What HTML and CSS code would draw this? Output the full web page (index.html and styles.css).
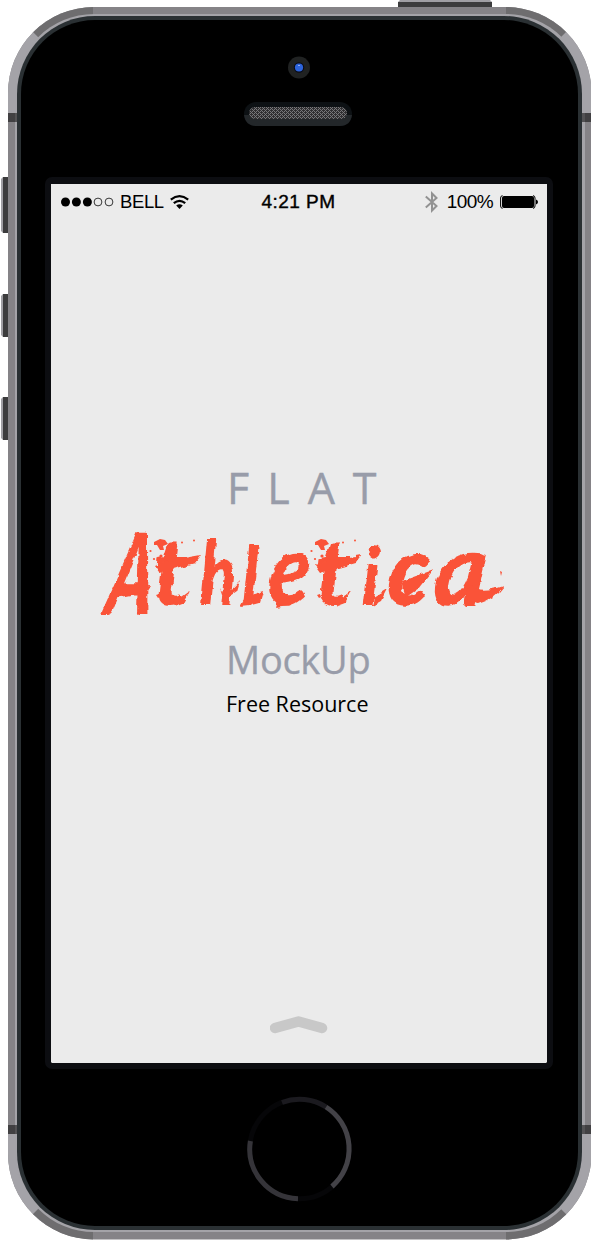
FILE: index.html
```
<!DOCTYPE html>
<html lang="en">
<head>
<meta charset="utf-8">
<title>Flat Athletica MockUp</title>
<link rel="stylesheet" href="styles.css">
</head>
<body>
<div class="phone">
  <svg class="shell" width="591" height="1240" viewBox="0 0 591 1240" aria-hidden="true">
    <defs>
      <clipPath id="body"><rect x="8" y="7" width="583.5" height="1232.5" rx="86"/></clipPath>
    </defs>
    <g fill="#3c3c3d">
      <path d="M3 177h5v56H3zM3 294h5v43H3zM3 397h5v43H3zM398 2h94v5h-94z"/>
    </g>
    <path fill="#a09fa4" d="M1 179l2-2v56l-2-2zM1 296l2-2v43l-2-2zM1 399l2-2v43l-2-2zM400 0h90l2 2h-94z"/>
    <g clip-path="url(#body)">
      <path fill="#858387" d="M0 0h591v1240H0z"/>
      <path fill="#a4a3a8" d="M8 20h52v93H8zM539 20h52v93h-52zM8 1134h52v92H8zM539 1134h52v92h-52z"/>
      <path fill="#6e6d6f" d="M93 7v40H48L33 32V0h60zM506 7v40h45l15-15V0h-60zM93 1240v-41H48l-15 15v26zM506 1240v-41h45l15 15v26z"/>
      <rect x="15" y="14" width="570" height="1218" rx="79" fill="#a4a3a8"/>
      <path fill="#414042" d="M8 113h7v9H8zM585 113h6v9h-6zM8 1125h7v9H8zM585 1125h6v9h-6z"/>
      <path fill="#535254" d="M15 113h3v9h-3zM582 113h3v9h-3zM15 1125h3v9h-3zM582 1125h3v9h-3z"/>
    </g>
    <rect x="17" y="16" width="565" height="1214" rx="78" fill="#2a3033"/>
    <rect x="21" y="20" width="557" height="1206" rx="74" fill="#000"/>
  </svg>

  <header class="top">
    <svg class="sensors" width="110" height="72" viewBox="0 0 110 72" aria-hidden="true">
      <defs>
        <pattern id="mesh" width="4" height="4" patternUnits="userSpaceOnUse">
          <path fill="#302f31" d="M0 0h4v4H0z"/>
          <path fill="#77777a" d="M0 0h1v1H0zM1 3h1v1H1zM2 2h1v1H2zM3 1h1v1H3zM0 2h1v1H0zM2 0h1v1H2z"/>
        </pattern>
      </defs>
      <circle cx="55" cy="12.5" r="11" fill="#202222"/>
      <circle cx="55" cy="12.5" r="5.2" fill="#0a0d19"/>
      <circle cx="55" cy="12.5" r="4.1" fill="#2d64db"/>
      <path fill="#91acf0" d="M54 10h2v1h-2z"/>
      <rect x="0" y="47" width="108" height="24" rx="12" fill="#0d1114"/>
      <path fill="#23272a" d="M0 60h108c-1 7-5 11-12 11H12C5 71 1 67 0 60z"/>
      <rect x="5" y="52" width="98" height="12" rx="6" fill="url(#mesh)"/>
    </svg>
  </header>

  <main class="screen">
    <div class="status">
      <div class="carrier">
        <svg width="53" height="10" viewBox="0 0 53 10" aria-hidden="true">
          <circle cx="4.5" cy="5" r="4.5"/><circle cx="15.4" cy="5" r="4.5"/><circle cx="26.4" cy="5" r="4.5"/>
          <g fill="none" stroke="#222" stroke-width=".9"><circle cx="37" cy="5" r="3.9"/><circle cx="48" cy="5" r="3.9"/></g>
        </svg>
        <span class="bell">BELL</span>
        <svg class="wifi" width="19" height="14" viewBox="0 0 19 14" aria-hidden="true">
          <g fill="none" stroke="#000" stroke-width="2.2"><path d="M.8 4.6Q9.5-2.2 18.2 4.6"/><path d="M3.8 8.2Q9.5 3.4 15.2 8.2"/></g>
          <path d="M6.2 10.6Q9.5 7.9 12.8 10.6L9.5 13.9z"/>
        </svg>
      </div>
      <div class="time">4:21 PM</div>
      <div class="power">
        <svg width="13" height="22" viewBox="0 0 13 22" aria-hidden="true"><path d="M.8 5.5L11.500 15 7 19.500V2.500L11.500 7 .8 16.500" fill="none" stroke="#929292" stroke-width="2"/></svg>
        <span class="percent">100%</span>
        <svg class="battery" width="38" height="14" viewBox="0 0 38 14" aria-hidden="true">
          <path d="M2.5.6Q.6.8.6 3v8q0 2.2 1.9 2.4M33 .6q2 .2 2 2.4v8q0 2.2-2 2.4" fill="none" stroke="#000"/>
          <rect x="2" y="1" width="32" height="12" rx="2"/><path d="M36 4.5q2 .7 2 2.5t-2 2.5z"/>
        </svg>
      </div>
    </div>

    <section class="title">
      <p class="flat">FLAT</p>
      <div class="brand">
        <h1 class="brush"><span class="g a1">A</span><span class="g t1">t</span><span class="g h1">h</span><span class="g l1">l</span><span class="g e1">e</span><span class="g t2">t</span><span class="g i1">i</span><span class="g c1">c</span><span class="g a2">a</span></h1>
        <svg class="spatter" width="420" height="100" viewBox="90 525 420 100" aria-hidden="true">
          <defs>
            <filter id="rough" x="-5%" y="-10%" width="110%" height="120%">
              <feTurbulence type="fractalNoise" baseFrequency=".11" numOctaves="3" seed="8" result="n"/>
              <feDisplacementMap in="SourceGraphic" in2="n" scale="5" xChannelSelector="R" yChannelSelector="G"/>
            </filter>
            <g id="drops">
              <path d="M154 542l6-3 5 1 3 4-5 2 1 4-4 0-3-5-3 0z"/>
              <circle cx="161" cy="556" r="1.6"/><circle cx="150.500" cy="551" r="1.1"/><circle cx="182" cy="542.500" r="1"/><circle cx="194" cy="540.500" r="1"/><circle cx="154" cy="559" r="1.1"/><path d="M156 595l3-1 1 3-2 1z"/>
            </g>
          </defs>
          <g fill="#fa5338">
            <use href="#drops"/><use href="#drops" x="161"/>
            <circle cx="142" cy="541" r="1.300"/><circle cx="141.500" cy="572.500" r="1"/>
            <path d="M469 553l3 0 0 4-3 0zM474 555l6-1 3 4-3 3-6-3zM500 571l2 1-1 4z"/>
            <g filter="url(#rough)">
              <path d="M118 587l33-2-5 7-31 6z"/>
              <path d="M154 566l13-5 34-6-6 8-36 10z"/>
              <path d="M315 566l13-5 34-6-6 8-36 10z"/>
              <path d="M172 600l7 0 11-8-6 11-8 3z"/>
              <path d="M333 600l7 0 11-8-6 11-8 3z"/>
              <path d="M220 588q5 11 20-7l-3 10-13 9z"/>
              <path d="M240 606l5-9 18-6-3 11-11 3z"/>
              <path d="M278 600l24-3-14 9-12 2z"/>
              <path d="M374 597l13-8-6 12-9 5z"/>
              <path d="M402 581l31-11-14 18-14 10z"/>
              <path d="M470 585q9 9 34 1-9 13-26 18-11-1-13-13z"/>
            </g>
          </g>
        </svg>
      </div>
      <p class="mockup">MockUp</p>
      <p class="free">Free Resource</p>
    </section>

    <svg class="chevron" width="58" height="19" viewBox="0 0 58 19" aria-hidden="true"><path d="M5 13l23.500-6.500 23.500 6.500" fill="none" stroke="#c8c8c8" stroke-width="10.500" stroke-linecap="round" stroke-linejoin="round"/></svg>
  </main>

  <footer class="bottom">
    <svg width="106" height="106" viewBox="247 1096 106 106" fill="none" stroke-width="5" aria-hidden="true">
      <circle cx="299.500" cy="1149" r="49.700" stroke="#060608"/>
      <path stroke="#1b1a1f" d="M282 1102.500A49.700 49.700 0 0 1 326 1107"/>
      <path stroke="#434247" d="M326 1107A49.700 49.700 0 0 1 332 1186.500"/>
      <path stroke="#353439" d="M298 1198.700A49.700 49.700 0 0 1 250.400 1141"/>
    </svg>
  </footer>
</div>
</body>
</html>
```

FILE: styles.css
```
* { box-sizing: border-box; }
body { margin: 0; background: #fff; overflow: hidden; }
svg { display: block; flex: none; }
p, h1 { margin: 0; font-weight: 400; }

.phone {
  position: relative;
  width: 591px;
  height: 1240px;
  padding-left: 45px;
  display: flex;
  flex-direction: column;
}
.shell { position: absolute; inset: 0; }
.top, .screen, .bottom { position: relative; width: 508px; }

.top { height: 177px; padding: 55px 0 0 199px; }
.screen {
  height: 892px;
  border: 6px solid #0c0d11;
  border-top-width: 7px;
  border-radius: 7px;
  background: #ebebeb;
  background-clip: padding-box;
  display: flex;
  flex-direction: column;
  align-items: center;
}
.bottom { padding: 27px 0 0 202px; }

.status {
  width: 100%;
  height: 35px;
  padding: 0 9px 0 10px;
  display: grid;
  grid-template-columns: 1fr auto 1fr;
  align-items: center;
  font: 19px/22px "Liberation Sans", Arial, sans-serif;
  color: #000;
}
.carrier, .power { display: flex; align-items: center; }
.power { justify-content: flex-end; }
.bell { margin-left: 6px; font-size: 18.500px; letter-spacing: -.4px; }
.wifi { margin-left: 6px; }
.time { margin-right: 2px; letter-spacing: .45px; -webkit-text-stroke: .4px #000; }
.percent { margin: 0 7px 0 9px; letter-spacing: -.6px; }

.title {
  width: 100%;
  height: 510px;
  margin-top: 242px;
  display: flex;
  flex-direction: column;
  font-family: "Open Sans", "Noto Sans", sans-serif;
  color: #989ca9;
}
.flat { height: 64px; padding-left: 176px; font-size: 43px; line-height: 54px; letter-spacing: 18px; -webkit-text-stroke: .4px #989ca9; }
.brand { position: relative; height: 107px; margin-left: 39px; }
.brush {
  display: flex;
  align-items: baseline;
  height: 100px;
  margin-top: -13px;
  padding-left: 12px;
  font-family: Lato, sans-serif;
  font-style: italic;
  font-weight: 900;
  line-height: 100px;
  color: #fa5338;
  filter: url(#rough);
}
.spatter { position: absolute; left: 0; top: 0; }
.g { flex: none; transform-origin: 0 78%; }
.a1 { width: 51px; font-size: 112px; transform: translate(4px, 9px) skewX(-8deg) scaleX(.62); }
.t1 { width: 47px; font-size: 94px; transform: scaleX(1); }
.h1 { width: 40px; font-size: 88px; transform: scaleX(.75); }
.l1 { width: 27px; font-size: 80px; transform: translateX(2px) scaleX(.85); }
.e1 { width: 48px; font-size: 100px; transform: skewX(-6deg) scaleX(.85); }
.t2 { width: 46px; font-size: 94px; transform: scaleX(1); }
.i1 { width: 25px; font-size: 80px; }
.c1 { width: 47px; font-size: 98px; transform: skewX(-6deg) scaleX(.95); }
.a2 { width: 60px; font-size: 100px; transform: skewX(-6deg); }

.mockup { height: 57px; padding-left: 175px; font-size: 38px; line-height: 54px; letter-spacing: -.3px; -webkit-text-stroke: .3px #989ca9; }
.free { padding-left: 175px; font-size: 21.500px; line-height: 30px; color: #000; }
.chevron { margin-top: 44px; }
```
